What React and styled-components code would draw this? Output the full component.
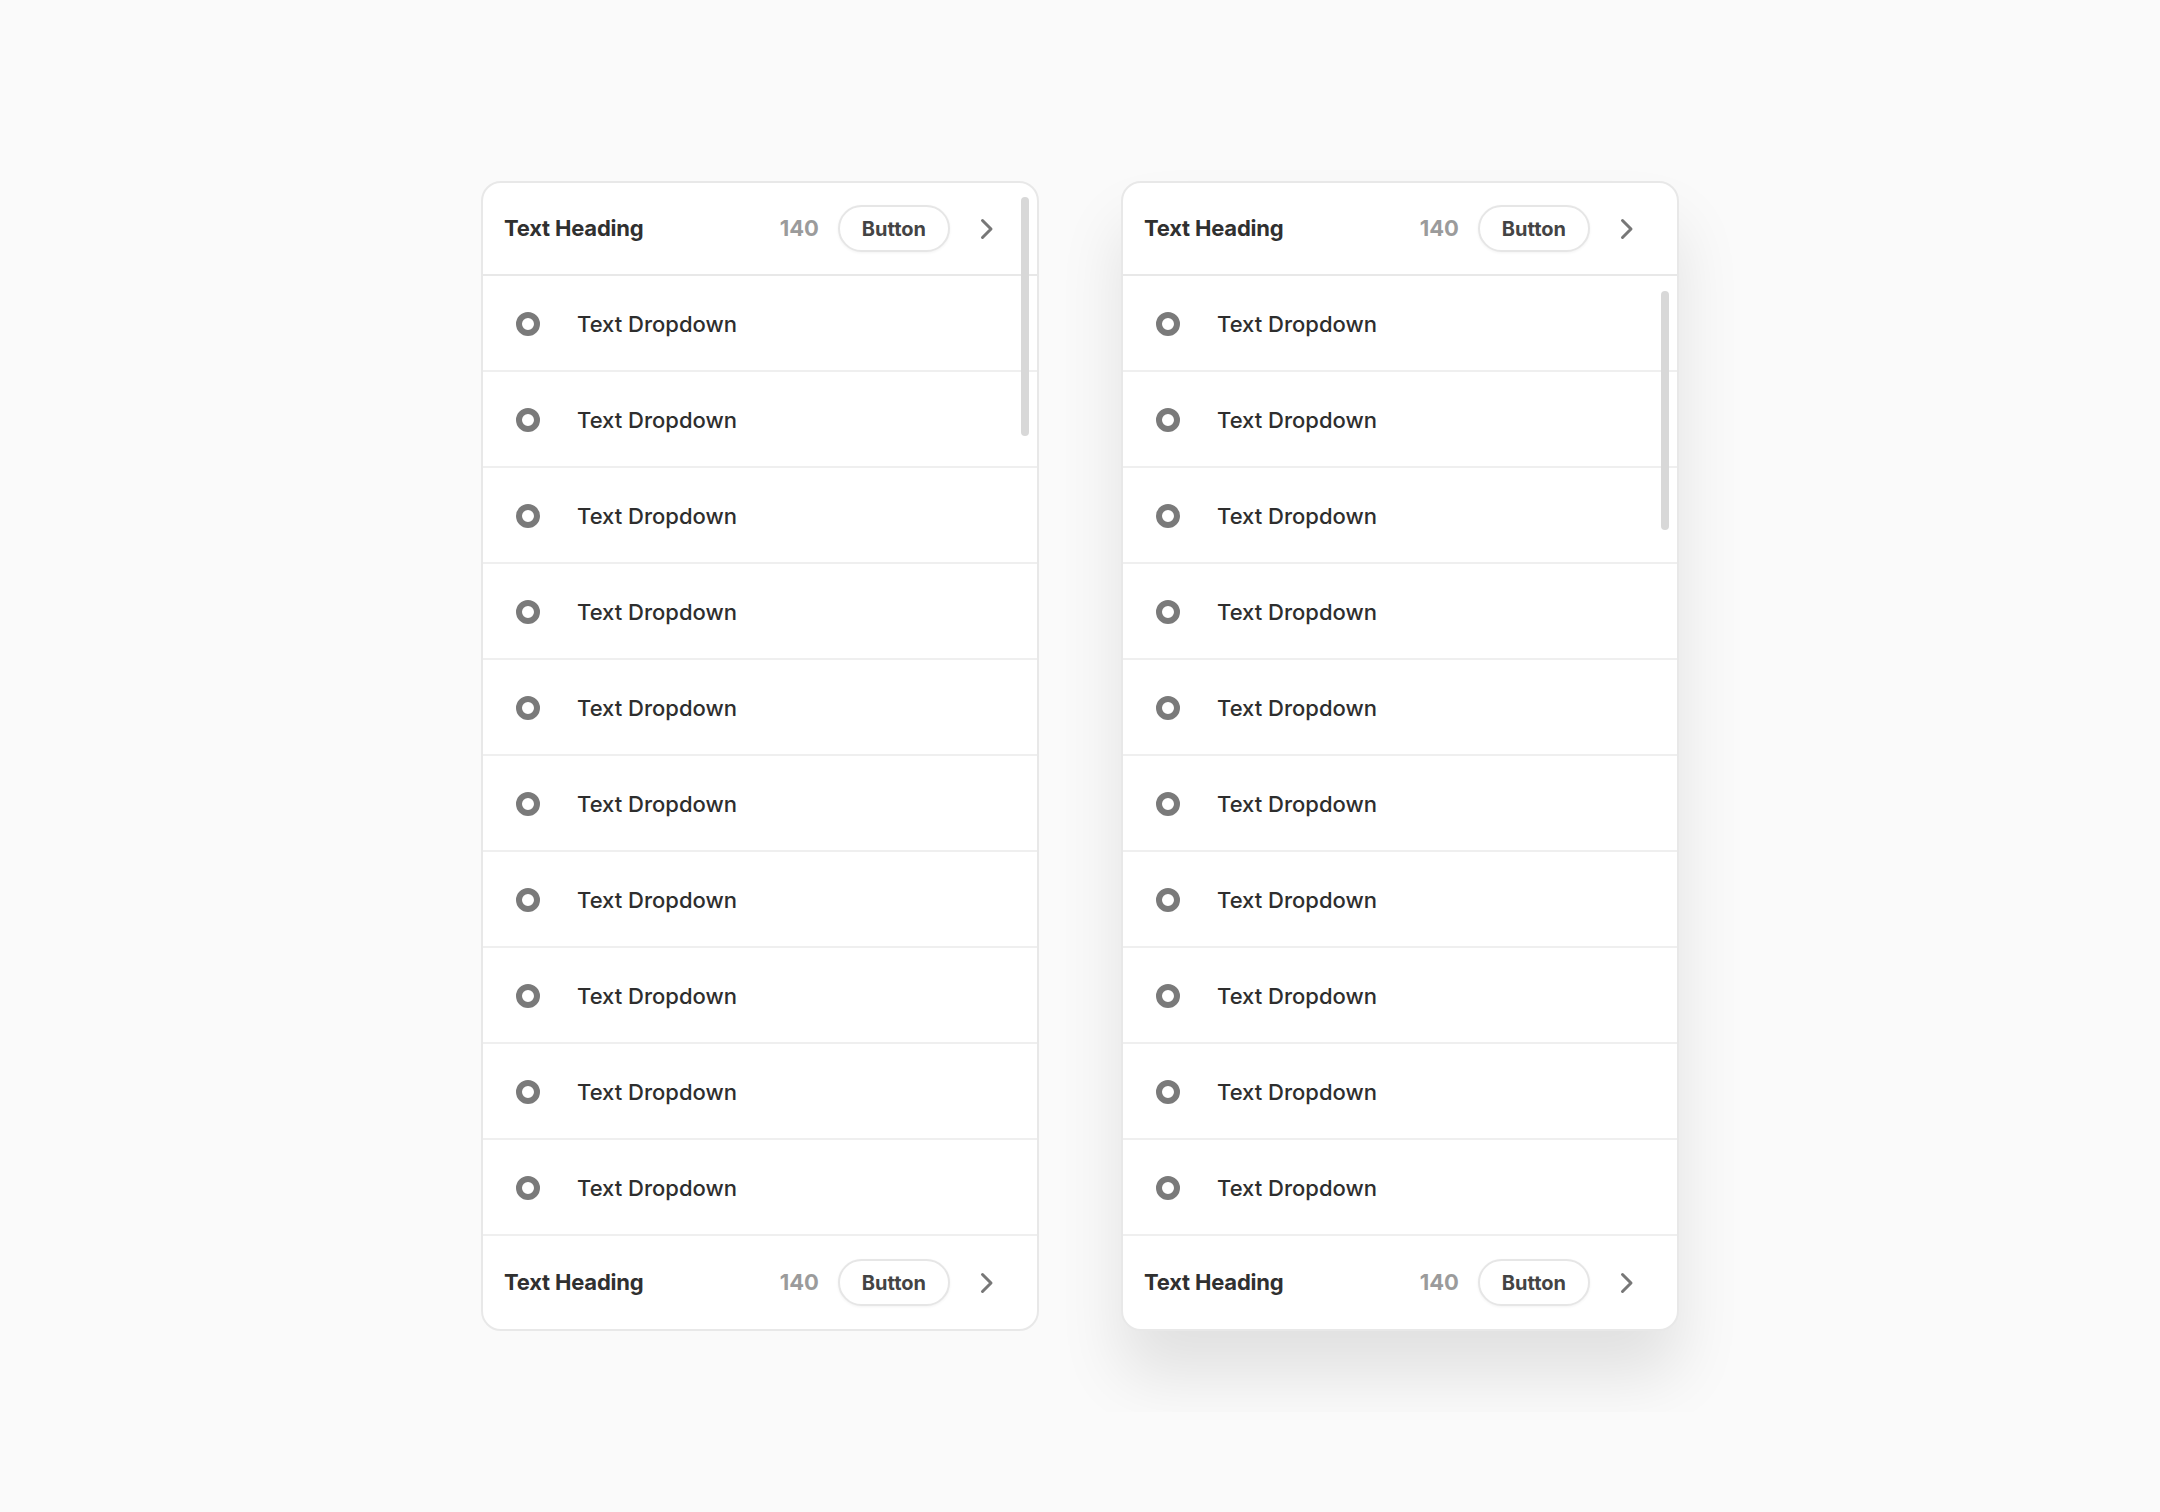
import React from "react";
import styled, { createGlobalStyle } from "styled-components";

const GlobalStyle = createGlobalStyle`
  * {
    box-sizing: border-box;
  }
  body {
    margin: 0;
    background: #fafafa;
    font-family: Inter, "Noto Sans", sans-serif;
    -webkit-font-smoothing: antialiased;
  }
`;

const ITEMS = Array.from({ length: 10 }, (_, i) => ({ id: i, label: "Text Dropdown" }));

const Chevron = () => (
  <svg width="14" height="22" viewBox="0 0 14 22" fill="none">
    <polyline
      points="2.5,2.5 11,11 2.5,19.5"
      stroke="#777777"
      strokeWidth="3"
      strokeLinecap="round"
      strokeLinejoin="round"
    />
  </svg>
);

const Bar = ({ divider }) => (
  <BarRow $divider={divider}>
    <Heading>Text Heading</Heading>
    <Count>140</Count>
    <PillButton type="button">Button</PillButton>
    <Chevron />
  </BarRow>
);

const List = () => (
  <>
    {ITEMS.map((item) => (
      <Row key={item.id}>
        <Radio />
        <RowLabel>{item.label}</RowLabel>
      </Row>
    ))}
  </>
);

const App = () => {
  return (
    <Page>
      <GlobalStyle />
      <Card>
        <Bar divider />
        <Body>
          <List />
        </Body>
        <Bar />
        <Thumb $top={14} />
      </Card>

      <ShadowClip>
        <Card $raised>
          <Bar divider />
          <Body>
            <List />
            <Thumb $top={15} />
          </Body>
          <Bar />
        </Card>
      </ShadowClip>
    </Page>
  );
};

export default App;

const Page = styled.div`
  width: 100%;
  min-height: 100vh;
  display: flex;
  align-items: center;
  justify-content: center;
  gap: 82px;
`;

const ShadowClip = styled.div`
  overflow: hidden;
  margin: -60px -70px -81px;
  padding: 60px 70px 81px;
`;

const Card = styled.div`
  position: relative;
  width: 558px;
  background: #ffffff;
  border: 2px solid #e8e8e8;
  border-radius: 20px;
  overflow: hidden;
  box-shadow: ${({ $raised }) =>
    $raised ? "0 44px 64px rgba(0, 0, 0, 0.1)" : "none"};
`;

const BarRow = styled.div`
  height: 93px;
  display: flex;
  align-items: center;
  padding: 0 43px 0 21px;
  border-bottom: ${({ $divider }) => ($divider ? "2px solid #e8e8e8" : "none")};
`;

const Heading = styled.div`
  flex: 1;
  font-size: 22px;
  font-weight: 700;
  color: #303030;
  letter-spacing: -0.2px;
  padding-bottom: 1px;
`;

const Count = styled.span`
  font-size: 22px;
  font-weight: 700;
  color: #9b9b9b;
  margin-right: 19px;
  padding-bottom: 1px;
`;

const PillButton = styled.button`
  height: 47px;
  padding: 0 22px;
  margin-right: 30px;
  border: 2px solid #e6e6e6;
  border-radius: 999px;
  background: #ffffff;
  box-shadow: 0 1px 3px rgba(0, 0, 0, 0.05);
  font-family: inherit;
  font-size: 20px;
  font-weight: 700;
  color: #444444;
`;

const Body = styled.div`
  position: relative;
`;

const Row = styled.div`
  height: 96px;
  display: flex;
  align-items: center;
  gap: 37px;
  padding-left: 33px;
  padding-top: 1px;
  border-bottom: 2px solid #efefef;
`;

const Radio = styled.span`
  width: 24px;
  height: 24px;
  border-radius: 50%;
  border: 6.5px solid #7a7a7a;
  flex-shrink: 0;
`;

const RowLabel = styled.span`
  font-size: 22px;
  font-weight: 500;
  color: #2e2e2e;
`;

const Thumb = styled.div`
  position: absolute;
  top: ${({ $top }) => $top}px;
  right: 8px;
  width: 8px;
  height: 239px;
  border-radius: 4px;
  background: #d8d8d8;
`;
